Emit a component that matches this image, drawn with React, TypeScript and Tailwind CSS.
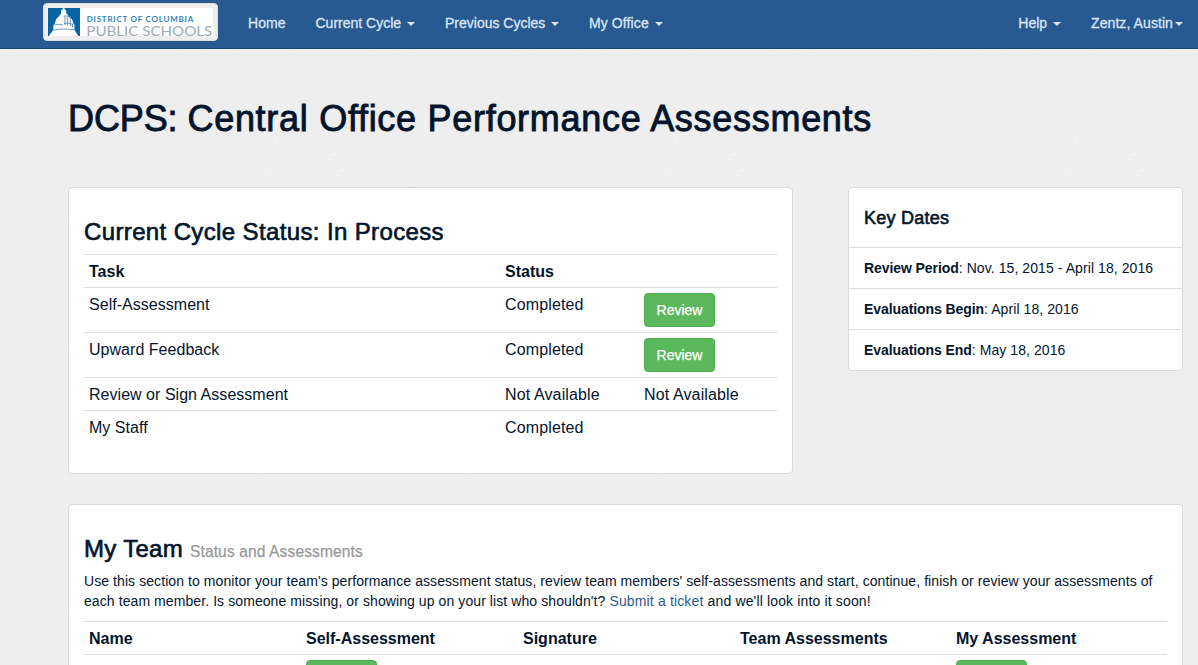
import type { ReactNode } from "react";

const SPECKS: [number, number][] = [
  [12, 4], [33, 5], [34, 18], [68, 16], [83, 15], [94, 26], [7, 31], [37, 33], [35, 41], [68, 36], [115, 33], [124, 27],
  [139, 35], [152, 20], [173, 19], [187, 21], [162, 34], [182, 36], [222, 12], [250, 12], [271, 13], [309, 15], [356, 8],
  [362, 12], [281, 25], [281, 29], [331, 27], [319, 31], [221, 33], [233, 43], [253, 43], [294, 46], [338, 42], [333, 47],
  [364, 38], [381, 35], [391, 26], [395, 49], [387, 53], [10, 56], [38, 54], [50, 64], [54, 64], [82, 52], [85, 57],
  [100, 60], [110, 54], [124, 48], [180, 54], [197, 51], [222, 48], [232, 58], [269, 57], [274, 60], [322, 56], [348, 58],
  [343, 63], [20, 72], [29, 83], [37, 89], [61, 90], [97, 85], [119, 71], [131, 77], [136, 70], [146, 76], [158, 68],
  [176, 64], [186, 70], [211, 69], [243, 69], [295, 69], [277, 75], [289, 85], [323, 77], [338, 76], [352, 88], [375, 83],
  [372, 84], [379, 71], [398, 70], [397, 79], [199, 81], [223, 83], [229, 89], [253, 90], [160, 88], [166, 96], [147, 100],
  [104, 98], [8, 105], [30, 104], [49, 103], [70, 106], [78, 109], [30, 121], [59, 122], [101, 123], [155, 122],
  [174, 109], [187, 103], [209, 103], [241, 103], [262, 106], [270, 109], [296, 98], [339, 100], [369, 99], [361, 110],
  [397, 109], [204, 120], [219, 127], [251, 122], [293, 123], [347, 122],
];

function Speckles() {
  return (
    <svg className="absolute inset-0 h-full w-full" aria-hidden="true" shapeRendering="crispEdges">
      <defs>
        <pattern id="specks" x="795" y="372" width="400" height="130" patternUnits="userSpaceOnUse">
          {SPECKS.map(([x, y]) => (
            <rect key={`${x}-${y}`} x={x} y={y} width="1" height="1" fill="#fff" />
          ))}
        </pattern>
      </defs>
      <rect width="100%" height="100%" fill="url(#specks)" />
    </svg>
  );
}

function Caret({ className = "" }: { className?: string }) {
  return <span className={`inline-block border-x-4 border-t-4 border-x-transparent border-t-[#d9e6f7] align-middle ${className}`} />;
}

function Logo() {
  return (
    <a className="ml-[43px] mt-[3px] flex h-[38px] w-[175px] shrink-0 rounded-[4px] border border-[#ddd] bg-[#eee] p-1">
      <svg width="165" height="28" viewBox="0 0 165 28" role="img" className="overflow-visible">
        <rect width="165" height="28" fill="#fff" />
        <rect width="32" height="28" fill="#0764a3" />
        <path
          d="M15 0h1.4l.4 1.5 1.4.8v3.2l1.1.5.6 1.6c3 1.6 4.9 4.2 5.4 7.6l1.2 1.6v4.7l1.3 2.7 1 1.3 1.7 2.5H1l1.8-2.7 1.2-1.5 1.3-2.3v-4.2l1.5-1.7c.5-3.4 2.1-6 4.6-7.6l.6-1.6 1.1-.5V2.3l1.4-.8z"
          fill="#fff"
        />
        <path
          d="M15.5 8.300c2.500-.8 4.900-.3 6.700 1.500M17 8.300v9M19.600 8.500v9M22.300 10v8M16 15.500c3-.7 5.800-.4 8.500 1M5.600 17.200c3.500-.9 6.400-.9 9.400-.3M4.500 22.300c7-1.600 15-1.700 23-.3M24.500 15.500v4"
          fill="none"
          stroke="#3c83b5"
          strokeWidth="0.8"
        />
        <text x="38.7" y="14.2" textLength="106.5" lengthAdjust="spacing" fontFamily="Lato, sans-serif" fontWeight="700" fontSize="8" fill="#2d7fb5">
          DISTRICT OF COLUMBIA
        </text>
        <text x="38.3" y="28" textLength="126" lengthAdjust="spacingAndGlyphs" fontFamily="Lato, sans-serif" fontSize="13" fill="#9daab8">
          PUBLIC SCHOOLS
        </text>
      </svg>
    </a>
  );
}

function ReviewButton() {
  return (
    <button className="block h-[34px] w-[71px] rounded-[4px] border border-[#4cae4c] bg-[#5cb85c] text-center text-[14px] leading-5 tracking-normal text-white [-webkit-text-stroke:0.25px_white]">
      Review
    </button>
  );
}

function Panel({ className, children }: { className: string; children: ReactNode }) {
  return <section className={`rounded-[4px] border border-[#d9dadb] bg-white ${className}`}>{children}</section>;
}

const TASKS: { task: string; status: string; action: ReactNode }[] = [
  { task: "Self-Assessment", status: "Completed", action: <ReviewButton /> },
  { task: "Upward Feedback", status: "Completed", action: <ReviewButton /> },
  { task: "Review or Sign Assessment", status: "Not Available", action: "Not Available" },
  { task: "My Staff", status: "Completed", action: "" },
];

const DATES = [
  ["Review Period", "Nov. 15, 2015 - April 18, 2016"],
  ["Evaluations Begin", "April 18, 2016"],
  ["Evaluations End", "May 18, 2016"],
];

export default function App() {
  return (
    <div className="relative flex h-[665px] w-[1198px] flex-col overflow-hidden bg-[#eee] font-['Liberation_Sans',Arial,sans-serif] text-[14px] leading-5 text-[#03152d]">
      <Speckles />
      <nav className="relative flex h-[49px] shrink-0 items-start border-b border-[#1d4675] bg-[#285a91] text-[#d9e6f7] [-webkit-text-stroke:0.3px_#d9e6f7]">
        <Logo />
        <div className="ml-[30px] flex pt-[13px] whitespace-nowrap">
          <a className="w-[67.5px] tracking-[0.1px]">Home</a>
          <a className="w-[129.5px]">Current Cycle <Caret className="ml-0.5" /></a>
          <a className="w-[144px]">Previous Cycles <Caret className="ml-0.5" /></a>
          <a className="tracking-[0.1px]">My Office <Caret className="ml-0.5" /></a>
        </div>
        <div className="mr-[15px] ml-auto flex gap-[30px] pt-[13px] whitespace-nowrap">
          <a>Help <Caret className="ml-0.5" /></a>
          <a className="tracking-[0.08px]">Zentz, Austin<Caret className="ml-0.5" /></a>
        </div>
      </nav>

      <main className="relative flex flex-col pr-[15px] pl-[68px]">
        <h1 className="mt-[50px] h-10 text-[36px] leading-10 tracking-[0.71px] whitespace-nowrap [-webkit-text-stroke:0.9px_#03152d]">
          <span className="tracking-[-0.1px]">DCPS: </span>Central Office Performance Assessments
        </h1>

        <div className="mt-[48px] flex items-start justify-between">
          <Panel className="h-[287px] w-[725px] px-[15px] pt-[30px]">
            <h2 className="h-[36px] text-[24px] leading-[27px] tracking-[0.37px] [-webkit-text-stroke:0.65px_#03152d]">Current Cycle Status: In Process</h2>
            <div className="text-[16px] leading-[22px]">
              <div className="grid grid-cols-[416px_139px_138px] border-t border-[#ddd] font-bold">
                <div className="px-[5px] pt-1.5 pb-1">Task</div>
                <div className="px-[5px] pt-1.5 pb-1">Status</div>
              </div>
              {TASKS.map((row) => (
                <div key={row.task} className="grid grid-cols-[416px_139px_138px] border-t border-[#ddd]">
                  <div className="px-[5px] pt-1.5 pb-1 tracking-[0.03px]">{row.task}</div>
                  <div className="px-[5px] pt-1.5 pb-1 tracking-[0.13px]">{row.status}</div>
                  <div className={typeof row.action === "string" ? "px-[5px] pt-1.5 pb-1 tracking-[0.13px]" : "p-[5px]"}>{row.action}</div>
                </div>
              ))}
            </div>
          </Panel>

          <Panel className="w-[335px]">
            <h3 className="h-[59px] px-[15px] pt-[19px] text-[18px] leading-[22px] tracking-[0.24px] [-webkit-text-stroke:0.6px_#03152d]">Key Dates</h3>
            {DATES.map(([label, value]) => (
              <div key={label} className="border-t border-[#ddd] px-[15px] py-[10px] tracking-[0.08px] whitespace-nowrap">
                <strong className="tracking-[-0.08px]">{label}</strong>: {value}
              </div>
            ))}
          </Panel>
        </div>

        <Panel className="mt-[30px] h-[400px] px-[15px] pt-[30px]">
          <h2 className="h-[36px] text-[24px] leading-[27px] tracking-[0.3px] [-webkit-text-stroke:0.65px_#03152d]">
            My Team <small className="text-[15.6px] tracking-[0.1px] text-[#999] [-webkit-text-stroke:0.25px_#999]">Status and Assessments</small>
          </h2>
          <p className="h-[50px] tracking-[0.077px] whitespace-nowrap">
            Use this section to monitor your team's performance assessment status, review team members' self-assessments and start, continue, finish or review your assessments of
            <br />
            <span className="tracking-[0.085px]">
              each team member. Is someone missing, or showing up on your list who shouldn't?{" "}
              <a className="tracking-[0.15px] text-[#285a91]">Submit a ticket</a>
              <span className="tracking-[0.15px]"> and we'll look into it soon!</span>
            </span>
          </p>
          <div className="text-[16px] leading-[22px]">
            <div className="grid grid-cols-[217px_217px_217px_216px_216px] border-t border-[#ddd] font-bold">
              {["Name", "Self-Assessment", "Signature", "Team Assessments", "My Assessment"].map((h) => (
                <div key={h} className="px-[5px] pt-1.5 pb-1">{h}</div>
              ))}
            </div>
            <div className="grid grid-cols-[217px_217px_217px_216px_216px] border-t border-[#ddd]">
              <div className="col-start-2 p-[5px]"><ReviewButton /></div>
              <div className="col-start-5 p-[5px]"><ReviewButton /></div>
            </div>
          </div>
        </Panel>
      </main>
    </div>
  );
}
